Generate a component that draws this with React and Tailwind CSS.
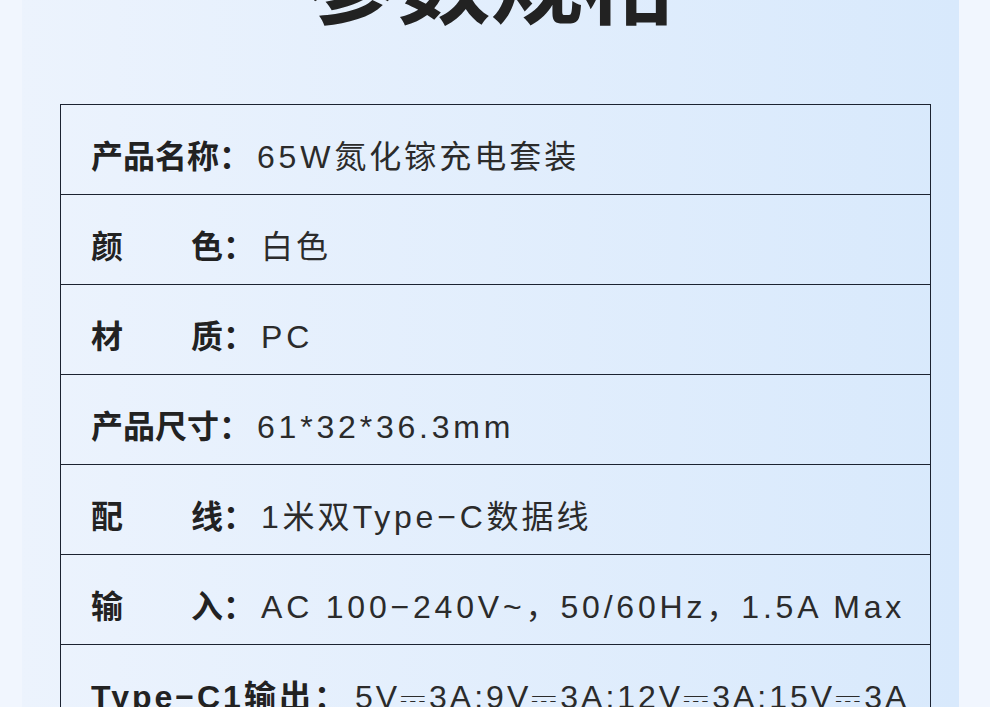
import React from 'react';

const rows = [
  { label: ['产', '品', '名', '称'], value: '65W氮化镓充电套装' },
  { label: ['颜', '色'], value: '白色' },
  { label: ['材', '质'], value: 'PC' },
  { label: ['产', '品', '尺', '寸'], value: '61*32*36.3mm' },
  { label: ['配', '线'], value: '1米双Type−C数据线' },
  { label: ['输', '入'], value: 'AC 100−240V~，50/60Hz，1.5A Max' },
];

// CJK runs get a little less spacing than latin runs
const Value = ({ text }) => {
  const parts = text.match(/[\u3000-\u9fff\uff00-\uffef]+|[^\u3000-\u9fff\uff00-\uffef]+/g) || [];
  return (
    <span className="text-[#2b2b2b] whitespace-nowrap">
      {parts.map((p, i) =>
        /[\u3000-\u9fff\uff00-\uffef]/.test(p) ? (
          <span key={i} className="tracking-[3px]">{p}</span>
        ) : (
          <span key={i} className="tracking-[3.8px]">{p}</span>
        )
      )}
    </span>
  );
};

const SpecRow = ({ label, value }) => (
  <div className="h-[90px] border-b border-[#1c2331] flex items-start pt-[36px] pl-[30px]">
    <div
      className={
        label.length === 2
          ? 'w-[132px] flex justify-between font-bold text-[#222]'
          : 'w-[128px] flex justify-between font-bold text-[#222]'
      }
    >
      {label.map((ch, i) => (
        <span key={i}>{ch}</span>
      ))}
    </div>
    <span className="font-bold text-[#222] w-[38px]">：</span>
    <Value text={value} />
  </div>
);

const App = () => {
  return (
    <div className="w-full h-[707px] overflow-hidden bg-[#f1f6fe] font-['Liberation_Sans','Noto_Sans_CJK_SC',sans-serif] text-[32px] leading-[32px]">
      <div className="flow-root ml-[22px] w-[937px] h-full bg-linear-to-r from-[#ecf3fd] to-[#d8e9fc]">
        <h1 className="-mt-[70px] h-[93px] text-center text-[93px] leading-[93px] font-bold text-[#222] font-['Noto_Sans_CJK_SC',sans-serif]">
          参数规格
        </h1>
        <div className="mt-[81px] ml-[38px] w-[871px] border-t border-x border-[#1c2331]">
          {rows.map((r, i) => (
            <SpecRow key={i} label={r.label} value={r.value} />
          ))}
          <div className="h-[90px] flex items-start pt-[36px] pl-[30px]">
            <span className="font-bold text-[#222] whitespace-nowrap tracking-[3px]">Type−C1输出：</span>
            <span className="text-[#2b2b2b] tracking-[3px] whitespace-nowrap ml-[6px]">5V⎓3A:9V⎓3A:12V⎓3A:15V⎓3A</span>
          </div>
        </div>
      </div>
    </div>
  );
};

export default App;
